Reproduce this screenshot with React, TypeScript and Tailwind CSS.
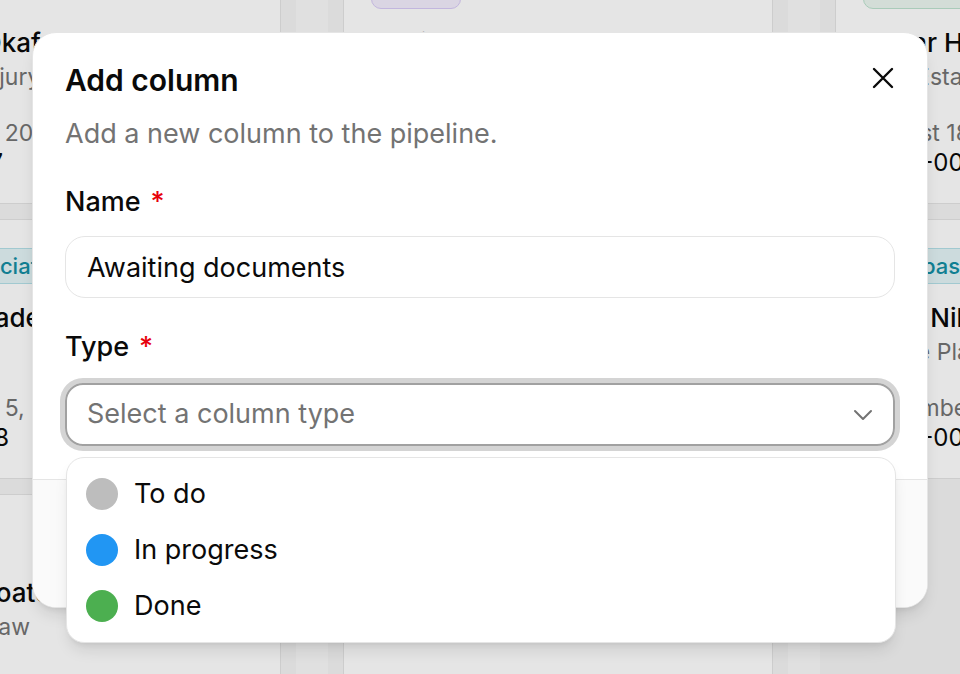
import { useState } from 'react';

type Tone = 'purple' | 'teal' | 'green' | 'slate';

type Matter = {
  tag: string;
  tone: Tone;
  client: string;
  area: string;
  opened: string;
  ref: string;
};

const badgeTone: Record<Tone, string> = {
  purple: 'border-[#d9cbf8] bg-[#f3eefd] text-[#7b5bc6]',
  teal: 'border-[#b4e0e8] bg-[#e4f4f7] text-[#128ea3]',
  green: 'border-[#bde3cf] bg-[#ebf7f0] text-[#2f9a62]',
  slate: 'border-neutral-200 bg-neutral-100 text-neutral-600',
};

const board: Matter[][] = [
  [
    { tag: 'Lead', tone: 'slate', client: 'Nnamdi Okafor', area: 'Personal injury', opened: 'September 20, 2026', ref: '2026-0017' },
    { tag: 'Civic association', tone: 'teal', client: 'Gabriel Nadeau', area: 'Probate', opened: 'September 5, 2026', ref: '2026-0028' },
    { tag: 'Referral', tone: 'slate', client: 'Marcus Boateng', area: 'Insurance law', opened: 'July 9, 2026', ref: '2026-0035' },
  ],
  [
    { tag: 'Intake', tone: 'purple', client: 'Daniel Reyes', area: 'Family law', opened: 'August 2, 2026', ref: '2026-0019' },
    { tag: 'Review', tone: 'slate', client: 'Priya Raman', area: 'Corporate', opened: 'October 14, 2026', ref: '2026-0026' },
    { tag: 'Intake', tone: 'purple', client: 'Tomás Herrera', area: 'Immigration', opened: 'August 30, 2026', ref: '2026-0039' },
  ],
  [
    { tag: 'Consultation', tone: 'green', client: 'Oscar Hughes', area: 'Real Estate', opened: 'August 18, 2026', ref: '2026-0031' },
    { tag: 'Trespass', tone: 'teal', client: 'Lena Nikolova', area: 'Estate Planning', opened: 'November 12, 2026', ref: '2026-0044' },
  ],
];

const columnTypes = [
  { label: 'To do', dot: 'bg-[#bdbdbd]' },
  { label: 'In progress', dot: 'bg-[#2196f3]' },
  { label: 'Done', dot: 'bg-[#4caf50]' },
];

function MatterCard({ m }: { m: Matter }) {
  return (
    <div className="rounded-xl border border-neutral-200 bg-white px-[27px] pt-7 pb-[25px]">
      <span
        className={`inline-flex h-9 items-center whitespace-nowrap rounded-[10px] border px-3 text-[22px] font-medium ${badgeTone[m.tone]}`}
      >
        {m.tag}
      </span>
      <div className="mt-[17px] whitespace-nowrap text-[26px] font-medium leading-[34px] text-neutral-950">
        {m.client}
      </div>
      <div className="mt-0.5 whitespace-nowrap text-[23px] leading-[30px] text-neutral-500">{m.area}</div>
      <div className="mt-[26px] whitespace-nowrap text-[23px] leading-[30px] text-neutral-500">{m.opened}</div>
      <div className="whitespace-nowrap text-[24px] leading-[30px] text-neutral-950">{m.ref}</div>
    </div>
  );
}

function RequiredLabel({ children }: { children: string }) {
  return (
    <label className="block text-[27px] font-medium leading-8 text-neutral-950">
      {children}
      <span className="ml-2.5 text-red-600">*</span>
    </label>
  );
}

export default function App() {
  const [name, setName] = useState('Awaiting documents');

  return (
    <main className="relative h-screen w-full overflow-hidden bg-[#fafafa] font-['Inter',sans-serif]">
      {/* pipeline board, scrolled sideways */}
      <div className="-mt-14 -ml-[164px] flex gap-8">
        {board.map((col, i) => (
          <div key={i} className="flex min-h-[800px] w-[460px] shrink-0 flex-col gap-[15px] bg-[#f4f4f4] px-[15px]">
            {col.map((m) => (
              <MatterCard key={m.ref} m={m} />
            ))}
          </div>
        ))}
      </div>

      {/* modal backdrop */}
      <div className="absolute inset-0 bg-black/10" />

      <div className="absolute left-8 top-8 flex h-[576px] w-[896px] flex-col overflow-hidden rounded-[24px] border border-neutral-200 bg-white shadow-lg">
        <button className="absolute right-[33px] top-[34px] text-neutral-950">
          <svg width="22" height="22" viewBox="0 0 22 22" fill="none" stroke="currentColor" strokeWidth="2.4" strokeLinecap="round">
            <path d="M2 2l18 18M20 2L2 20" />
          </svg>
        </button>

        <div className="flex-1 px-8 pt-[29px]">
          <h2 className="text-[30px] font-semibold leading-9 text-neutral-950">Add column</h2>
          <p className="mt-5 text-[27px] leading-8 text-neutral-500">Add a new column to the pipeline.</p>

          <div className="mt-9">
            <RequiredLabel>Name</RequiredLabel>
            <input
              value={name}
              onChange={(e) => setName(e.target.value)}
              className="mt-[18px] h-[62px] w-full rounded-[20px] border border-neutral-200 px-[21px] text-[27px] text-neutral-950 outline-none"
            />
          </div>

          <div className="mt-[33px]">
            <RequiredLabel>Type</RequiredLabel>
            <button className="mt-5 flex h-[63px] w-full items-center justify-between rounded-[18px] border-2 border-neutral-400 pl-5 pr-5 text-[27px] text-neutral-500 ring-[5px] ring-neutral-300">
              <span>Select a column type</span>
              <svg width="20" height="12" viewBox="0 0 20 12" fill="none" stroke="#737373" strokeWidth="2" strokeLinecap="round" strokeLinejoin="round">
                <path d="M2 2l8 8 8-8" />
              </svg>
            </button>
          </div>
        </div>

        <div className="flex h-[128px] items-center justify-end gap-4 border-t border-neutral-200 bg-neutral-50 px-8">
          <button className="h-[60px] rounded-[18px] border border-neutral-200 bg-white px-7 text-[27px] font-medium text-neutral-950">
            Cancel
          </button>
          <button className="h-[60px] rounded-[18px] bg-neutral-900 px-7 text-[27px] font-medium text-white">
            Add column
          </button>
        </div>
      </div>

      {/* open select menu */}
      <div className="absolute left-[66px] top-[457px] w-[830px] rounded-[18px] border border-neutral-200 bg-white py-2 shadow-lg">
        {columnTypes.map((t) => (
          <div key={t.label} className="flex h-14 items-center gap-4 px-[19px] text-[27px] text-neutral-950">
            <span className={`size-8 rounded-full ${t.dot}`} />
            {t.label}
          </div>
        ))}
      </div>
    </main>
  );
}
